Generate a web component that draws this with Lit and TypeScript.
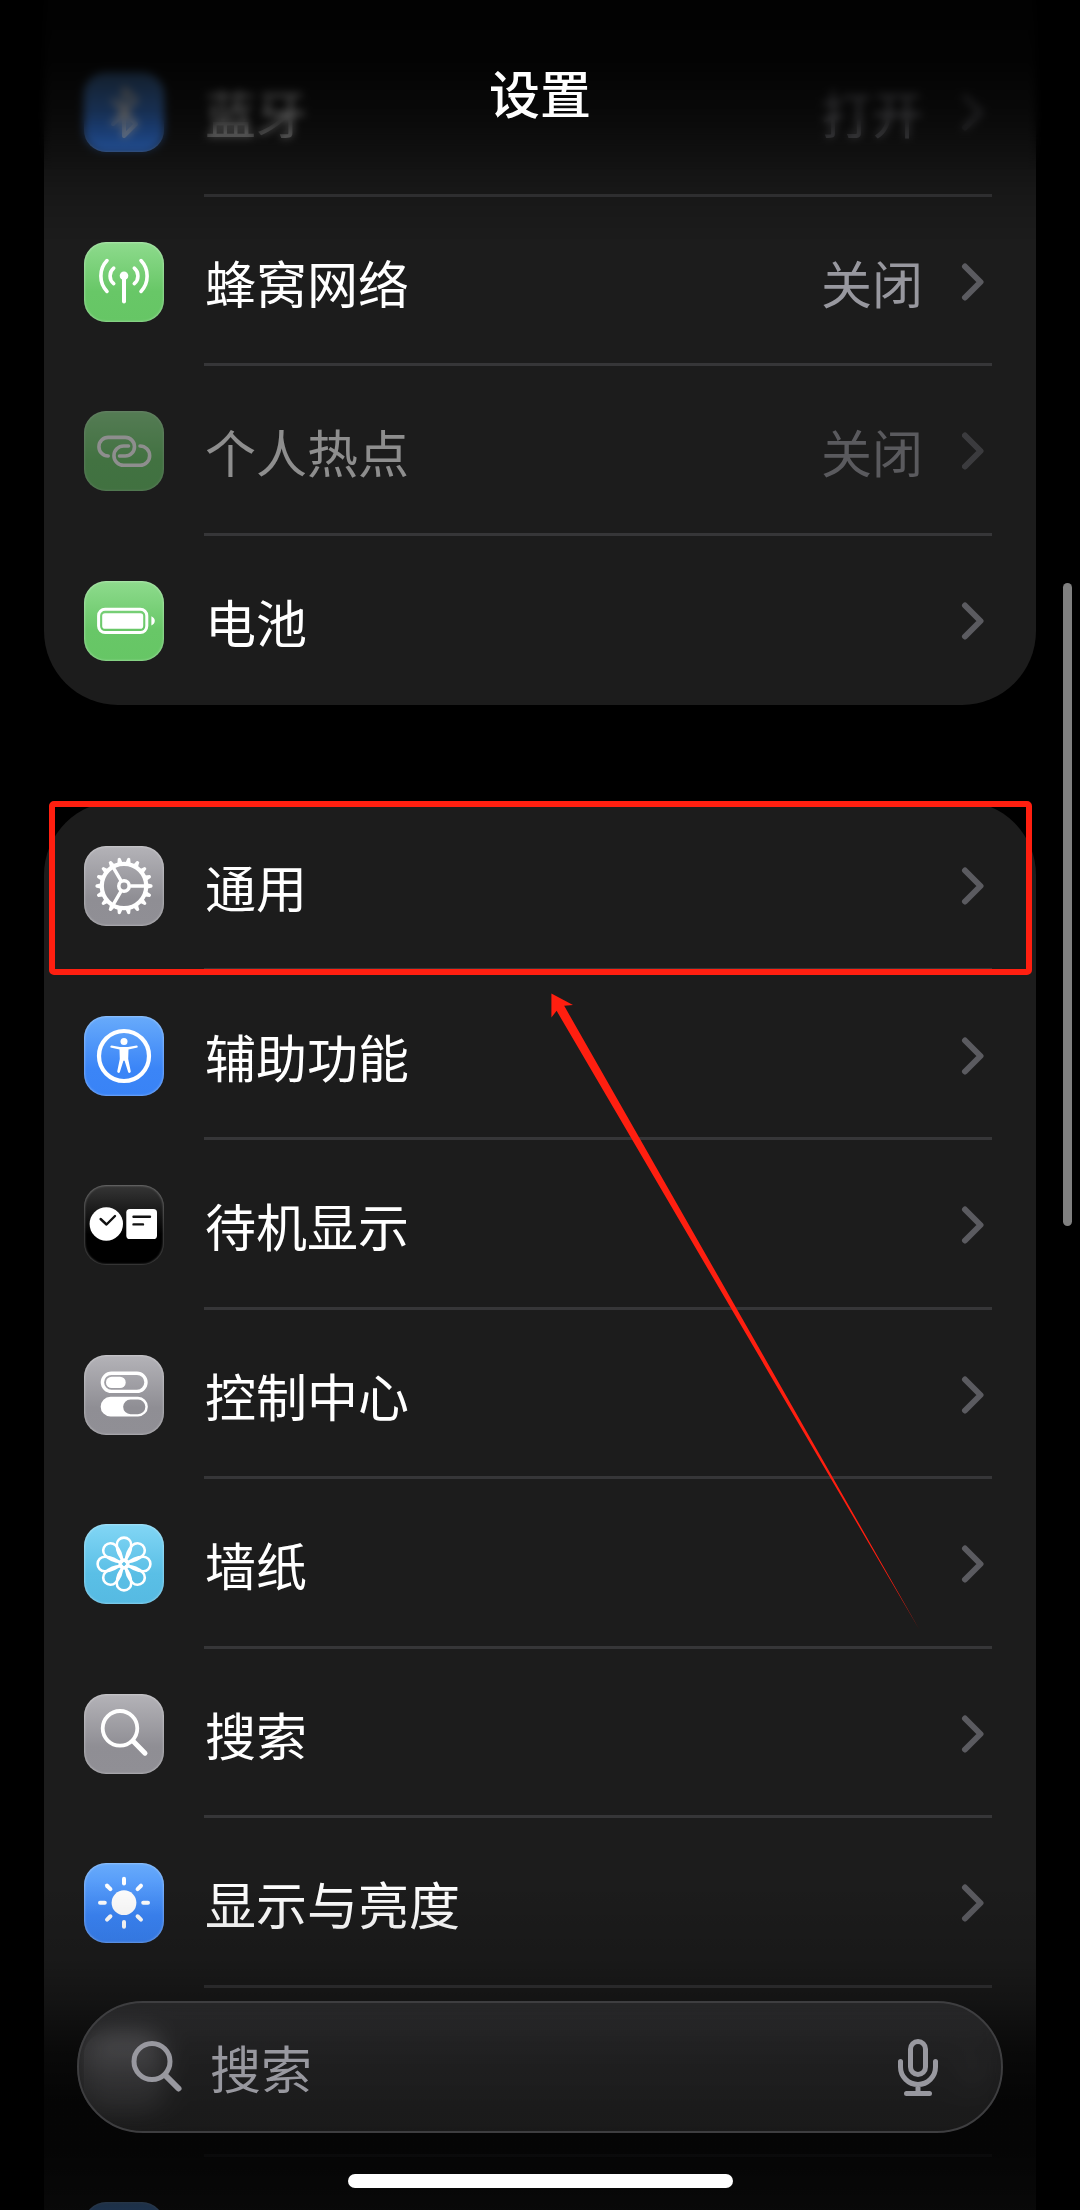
import { LitElement, html, svg, css, nothing, SVGTemplateResult } from "lit";
import { customElement, property } from "lit/decorators.js";
import { classMap } from "lit/directives/class-map.js";

type Tone = "green" | "gray" | "blue" | "cyan" | "black";

interface Row {
  glyph: string;
  tone: Tone;
  label?: string;
  value?: string;
  disabled?: boolean;
  marked?: boolean;
}

const NETWORK_ROWS: Row[] = [
  { glyph: "bluetooth", tone: "blue", label: "蓝牙", value: "打开" },
  { glyph: "cellular", tone: "green", label: "蜂窝网络", value: "关闭" },
  { glyph: "hotspot", tone: "green", label: "个人热点", value: "关闭", disabled: true },
  { glyph: "battery", tone: "green", label: "电池" },
];

const GENERAL_ROWS: Row[] = [
  { glyph: "gear", tone: "gray", label: "通用", marked: true },
  { glyph: "accessibility", tone: "blue", label: "辅助功能" },
  { glyph: "standby", tone: "black", label: "待机显示" },
  { glyph: "control", tone: "gray", label: "控制中心" },
  { glyph: "wallpaper", tone: "cyan", label: "墙纸" },
  { glyph: "search", tone: "gray", label: "搜索" },
  { glyph: "brightness", tone: "blue", label: "显示与亮度" },
  { glyph: "none", tone: "gray" },
  { glyph: "none", tone: "blue" },
];

const spin = (count: number, shape: (angle: number) => SVGTemplateResult) =>
  Array.from({ length: count }, (_, i) => shape((i * 360) / count));

const GLYPHS: Record<string, SVGTemplateResult | typeof nothing> = {
  none: nothing,
  bluetooth: svg`
    <path class="line" stroke-width="4" d="M29 28 52 52 40 64V16L52 28 29 52" />`,
  cellular: svg`
    <circle class="solid" cx="40" cy="33.7" r="4.3" />
    <path class="line" stroke-width="4" d="M40 34V59.5" />
    <path class="line" stroke-width="3.6"
      d="M50.3 26.2A10 10 0 0 1 50.3 41.6M29.7 26.2A10 10 0 0 0 29.7 41.6M57 18.6A22.4 22.4 0 0 1 57 49.4M23 18.6A22.4 22.4 0 0 0 23 49.4" />`,
  hotspot: svg`
    <path class="line" stroke-width="3.6"
      d="M24.2 45A9.3 9.3 0 0 1 24.3 26.4H41.2A9.3 9.3 0 0 1 41.2 45H35.5" />
    <path class="line" stroke-width="3.6"
      d="M44.5 35H39.6A9.65 9.65 0 0 0 39.6 54.3H56A9.65 9.65 0 0 0 56 35" />`,
  battery: svg`
    <rect class="line" stroke-width="3" x="14.6" y="28.2" width="48.2" height="23.4" rx="6.5" />
    <rect class="solid" x="18.2" y="32.3" width="41" height="15.4" rx="2.8" />
    <path class="solid" d="M67.4 35.2Q70.8 36.8 70.8 39.8 70.8 42.8 67.4 44.5Z" />`,
  gear: svg`
    <circle class="line" stroke-width="4.2" cx="40" cy="40" r="22.2" />
    <circle class="line" stroke-width="3.6" cx="40" cy="40" r="5.2" />
    ${spin(18, (a) => svg`<path class="solid" transform="rotate(${a} 40 40)" d="M63 37.3 68 38.6Q69.4 40 68 41.4L63 42.7Z" />`)}
    ${spin(3, (a) => svg`<path class="line" stroke-width="3.4" transform="rotate(${a} 40 40)" d="M47 40H61" />`)}`,
  accessibility: svg`
    <circle class="line" stroke-width="4.2" cx="40" cy="40" r="25" />
    <circle class="solid" cx="40" cy="25.6" r="3.5" />
    <path class="solid"
      d="M27.6 29.6 36 31H44L52.6 29.6Q54.4 29.8 53.5 31.5L44.5 33.6 44.2 43 46.8 55.5Q46.2 57.8 44.3 56.5L40.6 44.8H39.4L35.7 56.5Q33.8 57.8 33.2 55.5L35.8 43 35.5 33.6 26.5 31.5Q25.8 29.8 27.6 29.6Z" />`,
  standby: svg`
    <circle class="solid" cx="22.3" cy="39" r="16.7" />
    <rect class="solid" x="42.3" y="24" width="30.7" height="30" rx="3.6" />
    <path class="ink" stroke-width="2.4" d="M16.6 34 22.5 39.5 31 31M49.5 31.7H66M49.5 39.4H59" />`,
  control: svg`
    <rect class="line" stroke-width="3.4" x="18.4" y="18.2" width="43.6" height="18.2" rx="9.1" />
    <rect class="solid" x="22" y="21.7" width="19.7" height="11.4" rx="5.7" />
    <path class="solid" fill-rule="evenodd"
      d="M26.5 41.8H54A9.85 9.85 0 0 1 54 61.5H26.5A9.85 9.85 0 0 1 26.5 41.8ZM46.5 44.5A7.35 7.35 0 0 0 46.5 59.2H54A7.35 7.35 0 0 0 54 44.5Z" />`,
  wallpaper: svg`
    ${spin(8, (a) => svg`<path class="line" stroke-width="2.6" transform="rotate(${a} 40 40)" d="M40 37C35 32.5 32.8 27 32.8 20.6A7.2 7 0 0 1 47.2 20.6C47.2 27 45 32.5 40 37Z" />`)}
    <circle class="line" stroke-width="2.6" cx="40" cy="40" r="4.2" />`,
  search: svg`
    <circle class="line" stroke-width="3.8" cx="36" cy="34.3" r="17.3" />
    <path class="line" stroke-width="5" d="M49.5 47.5 61 59.2" />`,
  brightness: svg`
    <circle class="solid" cx="40" cy="39.7" r="12.4" />
    ${spin(8, (a) => svg`<path class="line" stroke-width="4" transform="rotate(${a} 40 39.7)" d="M59.2 39.7H64" />`)}`,
};

@customElement("settings-row")
class SettingsRow extends LitElement {
  @property({ attribute: false }) row!: Row;
  @property({ type: Boolean }) last = false;

  static styles = css`
    :host {
      display: block;
      position: relative;
    }
    .row {
      display: flex;
      align-items: stretch;
      gap: 40px;
      box-sizing: border-box;
      width: 100%;
      height: 100%;
      margin: 0;
      padding: 0 44px 0 40px;
      border: 0;
      background: none;
      color: #fff;
      font: inherit;
      text-align: left;
    }
    .tile {
      align-self: center;
      flex: none;
      width: 80px;
      height: 80px;
      border-radius: 22px;
      box-shadow: inset 0 0 2px 1px rgba(255, 255, 255, 0.28);
    }
    .tile svg {
      display: block;
      width: 80px;
      height: 80px;
    }
    .green { background: linear-gradient(#8edb8d, #68c767 62%, #66c665); }
    .gray { background: linear-gradient(#b4b3b8, #8f8e94 66%, #908f95); }
    .blue { background: linear-gradient(#68abfb, #3b85f7 66%, #3983f6); }
    .cyan { background: linear-gradient(#82d6f5, #5abfe6 62%, #56bae2); }
    .black { background: linear-gradient(#363636, #000 62%); }
    .line {
      fill: none;
      stroke: #fff;
      stroke-linecap: round;
      stroke-linejoin: round;
    }
    .solid { fill: #fff; }
    .ink {
      fill: none;
      stroke: #111;
      stroke-linecap: round;
      stroke-linejoin: round;
    }
    .body {
      flex: 1;
      min-width: 0;
      display: flex;
      align-items: center;
      gap: 38px;
      padding: 0 7px 0 1px;
      box-shadow: inset 0 -3px #363638;
    }
    .last .body { box-shadow: none; }
    .label { flex: 1; }
    .value { color: #98989f; }
    .chevron {
      flex: none;
      width: 24px;
      height: 40px;
      fill: none;
      stroke: #5b5b60;
      stroke-width: 6;
      stroke-linecap: round;
      stroke-linejoin: round;
    }
    .disabled .tile,
    .disabled .label,
    .disabled .value,
    .disabled .chevron { opacity: 0.5; }
    .marked::after {
      content: "";
      position: absolute;
      inset: 0 4px -4px 5px;
      border: 6px solid #ff1f10;
      border-radius: 5px;
    }
  `;

  render() {
    const { glyph, tone, label, value, disabled, marked } = this.row;
    return html`
      <button
        type="button"
        ?disabled=${disabled}
        class=${classMap({ row: true, disabled: !!disabled, marked: !!marked, last: this.last })}
      >
        <span class="tile ${tone}"><svg viewBox="0 0 80 80" aria-hidden="true">${GLYPHS[glyph]}</svg></span>
        <span class="body">
          <span class="label">${label ?? nothing}</span>
          ${value ? html`<span class="value">${value}</span>` : nothing}
          <svg class="chevron" viewBox="0 0 24 40" aria-hidden="true"><path d="M4 4.5 19.5 20 4 35.5" /></svg>
        </span>
      </button>
    `;
  }
}

@customElement("settings-group")
class SettingsGroup extends LitElement {
  @property({ attribute: false }) rows: Row[] = [];

  static styles = css`
    :host {
      display: grid;
      grid-auto-rows: 170px 169px;
      position: relative;
      background: #1c1c1c;
    }
  `;

  render() {
    return html`
      ${this.rows.map(
        (row, i) => html`<settings-row .row=${row} ?last=${i === this.rows.length - 1}></settings-row>`
      )}
      <slot></slot>
    `;
  }
}

@customElement("app-root")
class AppRoot extends LitElement {
  static styles = css`
    :host {
      display: block;
      position: relative;
      height: 100vh;
      overflow: hidden;
      background: #000;
      color: #fff;
      font-family: "Noto Sans CJK SC", sans-serif;
      font-size: 51px;
      line-height: 64px;
    }
    .list {
      display: flex;
      flex-direction: column;
      gap: 96px;
      padding: 0 44px;
    }
    .upper {
      padding-top: 27px;
      border-radius: 0 0 74px 74px;
    }
    .lower { border-radius: 74px; }
    .arrow {
      position: absolute;
      top: 192px;
      left: 507px;
      width: 368px;
      height: 636px;
      fill: #ff1f10;
      pointer-events: none;
    }
    .haze,
    .top,
    .foot {
      position: absolute;
      left: 0;
      right: 0;
    }
    .haze {
      top: 0;
      height: 170px;
      backdrop-filter: blur(4px);
      -webkit-mask-image: linear-gradient(#000 70%, transparent);
      mask-image: linear-gradient(#000 70%, transparent);
    }
    .top {
      top: 0;
      height: 240px;
      box-sizing: border-box;
      padding-top: 60px;
      text-align: center;
      background: linear-gradient(
        rgba(0, 0, 0, 0.92),
        rgba(0, 0, 0, 0.87) 60px,
        rgba(0, 0, 0, 0.68) 110px,
        rgba(0, 0, 0, 0.42) 150px,
        rgba(0, 0, 0, 0.16) 190px,
        transparent
      );
    }
    h1 {
      margin: 0;
      font-size: 51px;
      line-height: 64px;
      font-weight: 500;
    }
    .foot {
      bottom: 0;
      display: flex;
      flex-direction: column;
      align-items: center;
      gap: 41px;
      padding: 121px 77px 22px;
      background: linear-gradient(
        transparent,
        rgba(0, 0, 0, 0.12) 80px,
        rgba(0, 0, 0, 0.3) 120px,
        rgba(0, 0, 0, 0.66) 170px,
        rgba(0, 0, 0, 0.82) 220px,
        rgba(0, 0, 0, 0.82) 270px,
        rgba(0, 0, 0, 0.7) 330px
      );
    }
    .search {
      align-self: stretch;
      display: flex;
      align-items: center;
      gap: 27px;
      box-sizing: border-box;
      height: 132px;
      padding: 0 63px 0 52px;
      border: 2px solid #3e3e40;
      border-radius: 66px;
      background: linear-gradient(rgba(54, 54, 57, 0.5), rgba(46, 46, 46, 0.5));
      backdrop-filter: blur(12px) brightness(1.4);
    }
    .lens {
      flex: none;
      width: 52px;
      height: 52px;
    }
    .lens,
    .mic svg {
      fill: none;
      stroke: #98989f;
      stroke-width: 5;
      stroke-linecap: round;
    }
    input {
      flex: 1;
      min-width: 0;
      height: 64px;
      padding: 0;
      border: 0;
      outline: 0;
      background: none;
      color: #fff;
      font: inherit;
      -webkit-appearance: none;
      appearance: none;
    }
    input::placeholder {
      color: #98989f;
      opacity: 1;
    }
    .mic {
      flex: none;
      padding: 0;
      border: 0;
      background: none;
    }
    .mic svg {
      display: block;
      width: 40px;
      height: 58px;
    }
    .home {
      width: 385px;
      height: 14px;
      border-radius: 7px;
      background: #fff;
    }
    .scrollbar {
      position: absolute;
      top: 583px;
      right: 8px;
      width: 9px;
      height: 643px;
      border-radius: 5px;
      background: #808080;
    }
  `;

  render() {
    return html`
      <main class="list">
        <settings-group class="upper" .rows=${NETWORK_ROWS}></settings-group>
        <settings-group class="lower" .rows=${GENERAL_ROWS}>
          <svg class="arrow" viewBox="0 0 368 636" aria-hidden="true">
            <path d="M0.4 0.4 22 12 13.2 12.8 368 636 5.6 17.8 0.4 24.6Z" />
          </svg>
        </settings-group>
      </main>
      <div class="scrollbar"></div>
      <div class="haze"></div>
      <header class="top"><h1>设置</h1></header>
      <footer class="foot">
        <div class="search">
          <svg class="lens" viewBox="0 0 52 52" aria-hidden="true">
            <circle cx="21" cy="20.5" r="18" />
            <path stroke-width="6" d="M34.5 34.500 47.5 47.5" />
          </svg>
          <input type="search" placeholder="搜索" aria-label="搜索" />
          <button class="mic" type="button" aria-label="听写">
            <svg viewBox="0 0 40 58" aria-hidden="true">
              <rect x="12.5" y="3.5" width="15" height="33" rx="7.5" />
              <path d="M2.5 23.500V29A17.5 17.5 0 0 0 37.500 29V23.500M20 47V54M8.500 55.500H31.500" />
            </svg>
          </button>
        </div>
        <div class="home"></div>
      </footer>
    `;
  }
}
